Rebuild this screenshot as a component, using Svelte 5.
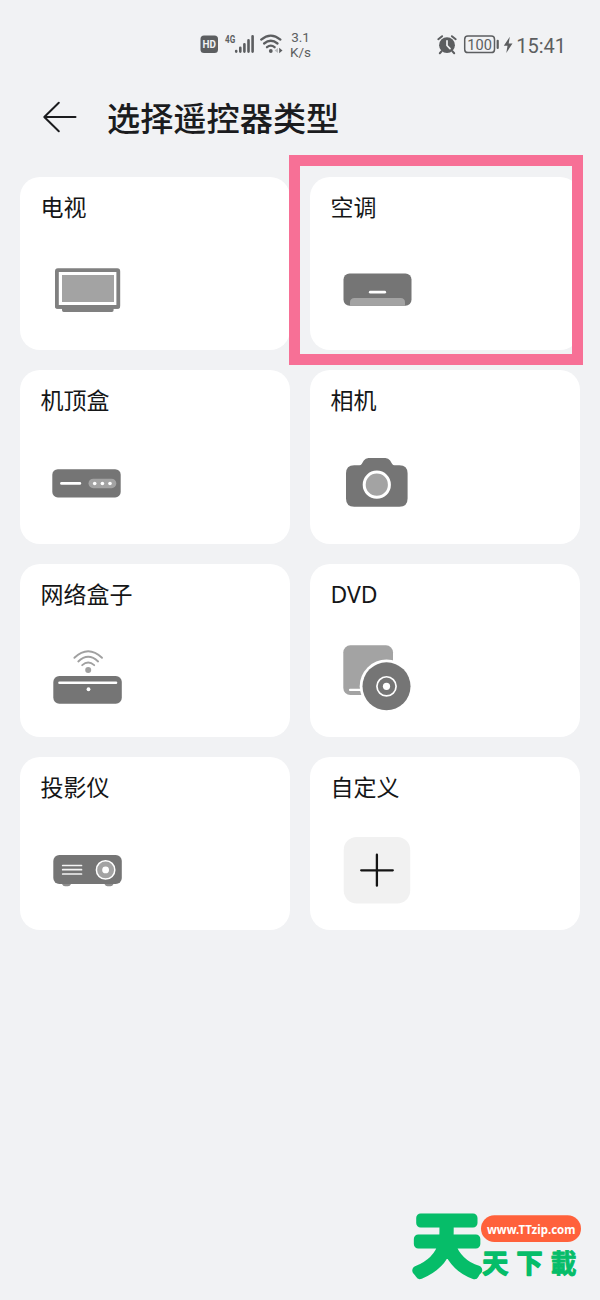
<script>
  const types = [
    { id: 'tv', label: '电视', box: '47 250 80 80' },
    { id: 'ac', label: '空调', box: '337 250 80 80' },
    { id: 'stb', label: '机顶盒', box: '47 443.33 80 80' },
    { id: 'camera', label: '相机', box: '337 443.33 80 80' },
    { id: 'netbox', label: '网络盒子', box: '47 636.67 80 80' },
    { id: 'dvd', label: 'DVD', box: '337 636.67 80 80' },
    { id: 'projector', label: '投影仪', box: '47 830 80 80' },
    { id: 'custom', label: '自定义', box: '337 830 80 80' }
  ];
</script>

<div class="screen">
  <header class="status">
    <div class="left">
      <svg class="signals" width="84" height="30" viewBox="199 30 84 30">
        <rect x="200.5" y="35.5" width="17.5" height="17.5" rx="3.5" fill="#5c5e60" />
        <text x="202.6" y="48.3" class="hd" textLength="13.4" lengthAdjust="spacingAndGlyphs">HD</text>
        <text x="225" y="43" class="net" textLength="10.2" lengthAdjust="spacingAndGlyphs">4G</text>
        <g stroke="#5c5e60" stroke-width="2.6" stroke-linecap="round">
          <path d="M236.2 51v.6M240.3 47.8v3.8M244.4 44.2v7.4M248.5 40.4v11.2M252.6 36.2v15.4" />
        </g>
        <g fill="none" stroke="#5c5e60" stroke-width="2.3" stroke-linecap="round">
          <path d="M261.2 39.6q9.6-8 19.2 0" />
          <path d="M264.1 43.5q6.7-5.6 13.4 0" />
          <path d="M267 47.2q3.8-3.1 7.6 0" />
        </g>
        <circle cx="270.8" cy="51" r="1.9" fill="#5c5e60" />
        <path d="M278 48l-3.4 2.5L278 53z" fill="#b9bbbd" />
        <path d="M279.2 47.8l3.3 2.7-3.3 2.7z" fill="#5c5e60" />
      </svg>
      <div class="speed"><span>3.1</span><span>K/s</span></div>
    </div>
    <div class="right">
      <svg width="78" height="30" viewBox="435 30 78 30">
        <circle cx="447" cy="45.2" r="7.9" fill="#5c5e60" />
        <path d="M438.3 39.2l3.8-3M455.7 39.2l-3.8-3M441.6 51.3l-1.8 1.9M452.4 51.3l1.8 1.9" stroke="#5c5e60" stroke-width="2" stroke-linecap="round" />
        <path d="M447 40.8v4.7l3 3.2" fill="none" stroke="#f1f2f4" stroke-width="1.7" stroke-linecap="round" />
        <rect x="464.7" y="36" width="29.8" height="16.6" rx="3.2" fill="none" stroke="#5c5e60" stroke-width="1.5" />
        <text x="467.3" y="50" class="batt" textLength="24.6" lengthAdjust="spacingAndGlyphs">100</text>
        <path d="M497.7 40.8v7.2" stroke="#5c5e60" stroke-width="2.2" stroke-linecap="round" />
        <path d="M509.8 36.8l-6 8.9h3.7l-1.2 7.2 6.2-9.4h-3.8z" fill="#5c5e60" />
      </svg>
      <span class="time">15:41</span>
    </div>
  </header>

  <div class="title">
    <svg width="36" height="34" viewBox="42 100 36 34">
      <path d="M75.5 117H44.5M58.8 102.8L44.3 117l14.5 14.2" fill="none" stroke="#1b1c1e" stroke-width="2" stroke-linecap="round" stroke-linejoin="round" />
    </svg>
    <h1>选择遥控器类型</h1>
  </div>

  <main class="grid">
    {#each types as type}
      <section class="card">
        <h2>{type.label}</h2>
        <svg class="icon" viewBox={type.box}>
          {#if type.id === 'tv'}
            <rect x="56.9" y="270.2" width="61.4" height="36.6" rx="1" fill="#fff" stroke="#808080" stroke-width="3.8" />
            <rect x="62" y="275" width="52" height="27" fill="#a3a3a3" />
            <path d="M55 305.2h65v1.5q0 2-2 2h-4.4v1.5q0 1.7-1.7 1.7H63.7q-1.7 0-1.7-1.7v-1.5h-5q-2 0-2-2z" fill="#808080" />
          {:else if type.id === 'ac'}
            <rect x="343.5" y="273.5" width="68" height="32.2" rx="6" fill="#757575" />
            <path d="M350 305.7v-3.2q0-4.5 4.5-4.5h46q4.5 0 4.5 4.5v3.2z" fill="#a3a3a3" />
            <path d="M370.3 292.2h14.4" stroke="#fff" stroke-width="2.8" stroke-linecap="round" />
          {:else if type.id === 'stb'}
            <rect x="52.3" y="469.5" width="68.4" height="28.3" rx="5.5" fill="#757575" />
            <path d="M61.5 483.8h18.3" stroke="#fff" stroke-width="2.8" stroke-linecap="round" />
            <rect x="88.5" y="479" width="27.8" height="9.6" rx="4.8" fill="#a3a3a3" />
            <g fill="#fff">
              <circle cx="94.7" cy="483.8" r="1.8" />
              <circle cx="102.4" cy="483.8" r="1.8" />
              <circle cx="110" cy="483.8" r="1.8" />
            </g>
          {:else if type.id === 'camera'}
            <path d="M354.2 465.5h5.3q1.4 0 2.2-1.2l2.1-3.4q1.7-2.6 4.7-2.6h16.9q3 0 4.7 2.6l2.1 3.4q.8 1.2 2.2 1.2h5q8.200 0 8.200 8.200v25.200q0 8.200-8.200 8.200h-45.200q-8.200 0-8.200-8.200v-25.200q0-8.200 8.200-8.200z" fill="#757575" />
            <circle cx="376.8" cy="485" r="12.6" fill="#a3a3a3" stroke="#fff" stroke-width="3" />
          {:else if type.id === 'netbox'}
            <rect x="53.3" y="675.6" width="68.5" height="27.9" rx="6" fill="#757575" />
            <path d="M59.5 682.4h56.5" stroke="#fff" stroke-width="2.6" stroke-linecap="round" />
            <circle cx="88.5" cy="688.9" r="1.9" fill="#fff" />
            <circle cx="88.2" cy="669.7" r="3" fill="#a0a0a0" />
            <g fill="none" stroke="#a0a0a0" stroke-width="1.9" stroke-linecap="round">
              <path d="M74.400 657.400q13.800-13 27.600 0" />
              <path d="M78.300 661.100q9.900-9.200 19.800 0" />
              <path d="M82.200 664.800q6-5.200 12 0" />
            </g>
          {:else if type.id === 'dvd'}
            <rect x="343.3" y="645" width="49.7" height="49.7" rx="7" fill="#a3a3a3" />
            <path d="M350 689.6h15" stroke="#fff" stroke-width="2.2" stroke-linecap="round" />
            <circle cx="386.5" cy="686" r="26.8" fill="#fff" />
            <circle cx="386.5" cy="686" r="24" fill="#757575" />
            <circle cx="386.5" cy="686" r="9.6" fill="none" stroke="#fff" stroke-width="1.7" />
            <circle cx="386.5" cy="686" r="3.6" fill="#fff" />
          {:else if type.id === 'projector'}
            <path d="M62 883h9v1q-1 2.3-3 2.3h-3q-2 0-3-2.3zM104.5 883h9v1q-1 2.3-3 2.3h-3q-2 0-3-2.3z" fill="#8d8d8d" />
            <rect x="53.3" y="855" width="68.5" height="29" rx="6" fill="#757575" />
            <path d="M62.7 865.5h18.8M62.7 869.7h18.8M62.7 874h18.8" stroke="#f4f4f4" stroke-width="1.7" stroke-linecap="round" />
            <circle cx="105.6" cy="869.9" r="9.2" fill="#a3a3a3" stroke="#fff" stroke-width="1.5" />
            <circle cx="105.6" cy="869.9" r="3.4" fill="#fff" />
          {:else}
            <rect x="343.7" y="837" width="66.5" height="66.5" rx="13" fill="#f1f1f1" />
            <path d="M376.900 854.700v31M361.200 870.300h31.600" stroke="#141414" stroke-width="2.3" stroke-linecap="round" />
          {/if}
        </svg>
      </section>
    {/each}
  </main>

  <div class="highlight"></div>

  <svg class="brand" width="180" height="94" viewBox="408 1206 180 94">
    <rect x="481" y="1215.3" width="100" height="26.7" rx="13.35" fill="#ff613b" />
    <text class="site" x="487" y="1234" textLength="88.5" lengthAdjust="spacingAndGlyphs">www.TTzip.com</text>
    <g class="mark">
      <text class="big" x="414" y="1268.5" font-size="66" stroke-width="9">天</text>
      <text x="482.3" y="1273" font-size="26" stroke-width="1.5">天</text>
      <text x="516.5" y="1273" font-size="26" stroke-width="1.5">下</text>
      <text x="550.5" y="1273" font-size="26" stroke-width=".8">載</text>
    </g>
  </svg>
</div>

<style>
  :global(body) {
    margin: 0;
    background: #f1f2f4;
  }
  .screen {
    position: relative;
    box-sizing: border-box;
    width: 600px;
    height: 1300px;
    overflow: hidden;
    background: #f1f2f4;
    font-family: "Noto Sans", "Noto Sans CJK SC", sans-serif;
    color: #151617;
  }
  svg {
    display: block;
  }
  .status {
    box-sizing: border-box;
    display: flex;
    justify-content: space-between;
    height: 90px;
    padding: 30px 34px 0 199px;
    color: #5c5e60;
    font-family: Roboto, sans-serif;
  }
  .left,
  .right {
    display: flex;
  }
  .speed {
    display: flex;
    flex-direction: column;
    align-items: center;
    padding-left: 7px;
    font-size: 13.5px;
    line-height: 15px;
  }
  .time {
    width: 50px;
    padding-left: 3px;
    font-size: 20px;
    font-weight: 400;
    line-height: 32px;
    text-align: right;
  }
  .hd {
    fill: #f1f2f4;
    font: 700 10px Roboto, sans-serif;
  }
  .net {
    fill: #5c5e60;
    font: 700 10px Roboto, sans-serif;
  }
  .batt {
    fill: #5c5e60;
    font: 400 15.5px Roboto, sans-serif;
  }
  .title {
    display: flex;
    align-items: center;
    gap: 29px;
    height: 54px;
    padding-left: 42px;
  }
  h1 {
    margin: 0;
    padding-top: 4px;
    font-size: 33.2px;
    font-weight: 500;
    line-height: 50px;
    color: #1b1c1e;
  }
  .grid {
    display: grid;
    grid-template-columns: 270px 270px;
    grid-auto-rows: 173.33px;
    gap: 20px;
    padding: 33px 20px 0;
  }
  .card {
    box-sizing: border-box;
    padding: 15px 0 0 20.5px;
    border-radius: 20px;
    background: #fff;
  }
  h2 {
    height: 30px;
    margin: 0;
    font-size: 23px;
    font-weight: 400;
    line-height: 30px;
  }
  .icon {
    width: 80px;
    height: 80px;
    margin: 28px 0 0 6.5px;
  }
  .highlight {
    position: absolute;
    left: 289px;
    top: 155px;
    box-sizing: border-box;
    width: 294px;
    height: 210px;
    border: 11px solid #f77096;
  }
  .brand {
    position: absolute;
    left: 408px;
    top: 1206px;
  }
  .mark {
    fill: #06bd69;
    stroke: #06bd69;
    stroke-linejoin: round;
    font-family: "Noto Sans CJK TC", sans-serif;
    font-weight: 700;
  }
  .big {
    font-weight: 400;
  }
  .site {
    fill: #fff;
    font: 700 13px "Noto Sans", sans-serif;
  }
</style>
